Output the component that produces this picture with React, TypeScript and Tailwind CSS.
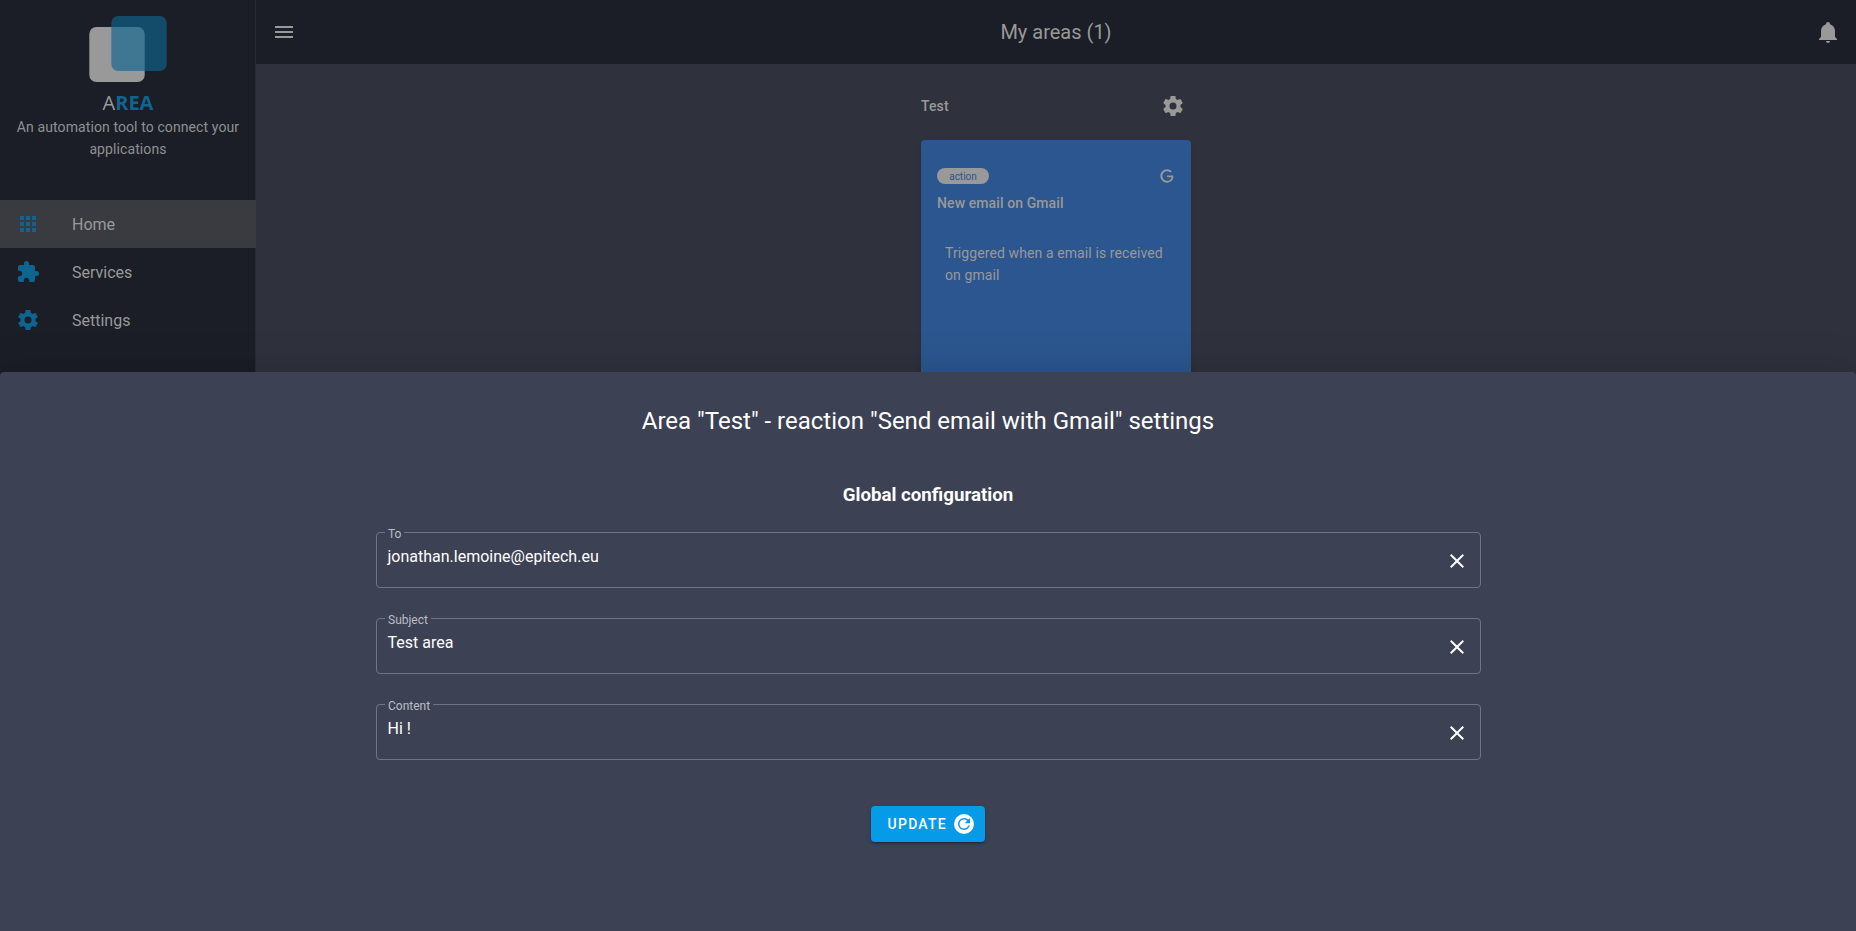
import type { ReactNode } from "react";

const paths = {
  menu: "M3,6H21V8H3V6M3,11H21V13H3V11M3,16H21V18H3V16Z",
  bell: "M21,19V20H3V19L5,17V11C5,7.9 7.03,5.17 10,4.29C10,4.19 10,4.1 10,4A2,2 0 0,1 12,2A2,2 0 0,1 14,4C14,4.1 14,4.19 14,4.29C16.97,5.17 19,7.9 19,11V17L21,19M14,21A2,2 0 0,1 12,23A2,2 0 0,1 10,21",
  apps: "M16,20H20V16H16M16,14H20V10H16M10,8H14V4H10M16,8H20V4H16M10,14H14V10H10M4,14H8V10H4M4,20H8V16H4M10,20H14V16H10M4,8H8V4H4V8Z",
  puzzle:
    "M20.5,11H19V7C19,5.89 18.1,5 17,5H13V3.5A2.5,2.5 0 0,0 10.5,1A2.5,2.5 0 0,0 8,3.5V5H4A2,2 0 0,0 2,7V10.8H3.5C5,10.8 6.2,12 6.2,13.5C6.2,15 5,16.2 3.5,16.2H2V20A2,2 0 0,0 4,22H7.8V20.5C7.8,19 9,17.8 10.5,17.8C12,17.8 13.2,19 13.2,20.5V22H17A2,2 0 0,0 19,20V16H20.5A2.5,2.5 0 0,0 23,13.5A2.5,2.5 0 0,0 20.5,11Z",
  cog: "M12,15.5A3.5,3.5 0 0,1 8.5,12A3.5,3.5 0 0,1 12,8.5A3.5,3.5 0 0,1 15.5,12A3.5,3.5 0 0,1 12,15.5M19.43,12.97C19.47,12.65 19.5,12.33 19.5,12C19.5,11.67 19.47,11.34 19.43,11L21.54,9.37C21.73,9.22 21.78,8.95 21.66,8.73L19.66,5.27C19.54,5.05 19.27,4.96 19.05,5.05L16.56,6.05C16.04,5.66 15.5,5.32 14.87,5.07L14.5,2.42C14.46,2.18 14.25,2 14,2H10C9.75,2 9.54,2.18 9.5,2.42L9.13,5.07C8.5,5.32 7.96,5.66 7.44,6.05L4.95,5.05C4.73,4.96 4.46,5.05 4.34,5.27L2.34,8.73C2.21,8.95 2.27,9.22 2.46,9.37L4.57,11C4.53,11.34 4.5,11.67 4.5,12C4.5,12.33 4.53,12.65 4.57,12.97L2.46,14.63C2.27,14.78 2.21,15.05 2.34,15.27L4.34,18.73C4.46,18.95 4.73,19.03 4.95,18.95L7.44,17.94C7.96,18.34 8.5,18.68 9.13,18.93L9.5,21.58C9.54,21.82 9.75,22 10,22H14C14.25,22 14.46,21.82 14.5,21.58L14.87,18.93C15.5,18.67 16.04,18.34 16.56,17.94L19.05,18.95C19.27,19.03 19.54,18.95 19.66,18.73L21.66,15.27C21.78,15.05 21.73,14.78 21.54,14.63L19.43,12.97Z",
  google:
    "M21.35,11.1H12.18V13.83H18.69C18.36,17.64 15.19,19.27 12.19,19.27C8.36,19.27 5,16.25 5,12C5,7.9 8.2,4.73 12.2,4.73C15.29,4.73 17.1,6.7 17.1,6.7L19,4.72C19,4.72 16.56,2 12.1,2C6.42,2 2.03,6.8 2.03,12C2.03,17.05 6.16,22 12.25,22C17.6,22 21.5,18.33 21.5,12.91C21.5,11.76 21.35,11.1 21.35,11.1V11.1Z",
  close:
    "M19,6.41L17.59,5L12,10.59L6.41,5L5,6.41L10.59,12L5,17.59L6.41,19L12,13.41L17.59,19L19,17.59L13.41,12L19,6.41Z",
};

function Icon({ name, className = "size-6" }: { name: keyof typeof paths; className?: string }) {
  return (
    <svg viewBox="0 0 24 24" fill="currentColor" className={`shrink-0 ${className}`}>
      <path d={paths[name]} />
    </svg>
  );
}

function Logo() {
  return (
    <svg viewBox="0 0 78 66" className="h-[66px] w-[78px]">
      <rect x="0.3" y="11" width="55.4" height="55" rx="7" fill="#999999" />
      <rect x="22.3" y="0" width="55.4" height="55" rx="7" fill="#106590" fillOpacity="0.65" />
    </svg>
  );
}

function NavItem({ icon, label, active }: { icon: "apps" | "puzzle" | "cog"; label: string; active?: boolean }) {
  return (
    <a className={`flex h-12 items-center gap-8 px-4 ${active ? "bg-[#393b41]" : ""}`}>
      <Icon name={icon} className="size-6 text-[#0f6490]" />
      <span className="pt-0.5 text-base text-[#999999]">{label}</span>
    </a>
  );
}

function Sidebar() {
  return (
    <aside className="flex w-64 shrink-0 flex-col border-r border-[#292b34] bg-[#1b1e27]">
      <div className="-mr-px flex h-[200px] flex-col items-center pt-4">
        <Logo />
        <div className="mt-[7px] h-[27px] font-['Open_Sans',sans-serif] text-xl leading-7 text-[#999999]">
          A<b className="text-[#0f6490]">REA</b>
        </div>
        <p className="px-4 text-center text-sm leading-[22px] tracking-[0.1px] text-[#8f9092]">
          An automation tool to connect your applications
        </p>
      </div>
      <nav className="-mr-px">
        <NavItem icon="apps" label="Home" active />
        <NavItem icon="puzzle" label="Services" />
        <NavItem icon="cog" label="Settings" />
      </nav>
    </aside>
  );
}

function Field({ label, children }: { label: string; children: ReactNode }) {
  return (
    <fieldset className="flex h-[62px] w-full items-start justify-between rounded border border-[#717480] pr-[11.5px] pl-[10.5px]">
      <legend className="-ml-[2.5px] h-3 px-[3px] text-xs leading-4 text-[#bcbdc4]">{label}</legend>
      <span className="mt-[9px] text-base leading-5 text-white">{children}</span>
      <Icon name="close" className="mt-[11px] size-6 text-white" />
    </fieldset>
  );
}

export default function App() {
  return (
    <div className="relative h-[931px] w-full overflow-hidden bg-[#2f313c] font-[Roboto,sans-serif]">
      <div className="flex h-full">
        <Sidebar />
        <div className="flex min-w-0 flex-1 flex-col">
          <header className="grid h-16 grid-cols-[1fr_auto_1fr] items-center bg-[#1b1e27] px-4 text-[#999999]">
            <Icon name="menu" />
            <h1 className="text-xl">My areas (1)</h1>
            <Icon name="bell" className="size-6 justify-self-end" />
          </header>
          <main className="flex justify-center pt-6">
            <section className="w-[270px] text-[#999999]">
              <div className="flex h-[52px] items-start justify-between pt-1.5 pr-1.5">
                <h2 className="pt-px text-sm leading-[22px] font-medium tracking-[0.1px]">Test</h2>
                <Icon name="cog" />
              </div>
              <article className="h-[400px] rounded bg-[#2b568f] px-4 pt-7 shadow-md">
                <div className="flex h-4 items-center justify-between">
                  <span className="flex h-4 w-[52px] items-center justify-center rounded-full bg-[#999999] text-[10px] text-[#2b568f]">
                    action
                  </span>
                  <Icon name="google" className="size-4" />
                </div>
                <h3 className="mt-2 text-sm leading-[22px] font-medium tracking-[0.1px]">New email on Gmail</h3>
                <p className="mt-7 px-2 text-sm leading-[22px] tracking-[0.1px]">
                  Triggered when a email is received on gmail
                </p>
              </article>
            </section>
          </main>
        </div>
      </div>

      <div
        role="dialog"
        className="absolute inset-x-0 bottom-0 flex h-[559px] flex-col items-center rounded-t bg-[#3d4154] text-white shadow-[0_11px_15px_-7px_rgba(0,0,0,0.2),0_24px_38px_3px_rgba(0,0,0,0.14),0_9px_46px_8px_rgba(0,0,0,0.12)]"
      >
        <h2 className="mt-[33px] text-2xl leading-8">Area "Test" - reaction "Send email with Gmail" settings</h2>
        <h3 className="mt-11 text-[18.72px] leading-7 font-bold">Global configuration</h3>
        <form className="mt-[17px] ml-px flex w-[1105px] flex-col gap-6">
          <Field label="To">jonathan.lemoine@epitech.eu</Field>
          <Field label="Subject">Test area</Field>
          <Field label="Content">Hi !</Field>
        </form>
        <button className="mt-[46px] flex h-9 w-[114px] items-center justify-end gap-[5px] rounded bg-[#069be8] pr-[9px] text-sm font-medium tracking-[1.25px] shadow-[0_3px_1px_-2px_rgba(0,0,0,0.2),0_2px_2px_0_rgba(0,0,0,0.14),0_1px_5px_0_rgba(0,0,0,0.12)]">
          UPDATE
          <svg viewBox="0 0 24 24" className="size-6">
            <circle cx="12" cy="12" r="10" fill="white" />
            <path
              className="fill-[#069be8]"
              transform="translate(3 3) scale(0.75)"
              d="M17.65,6.35C16.2,4.9 14.21,4 12,4A8,8 0 0,0 4,12A8,8 0 0,0 12,20C15.73,20 18.84,17.45 19.73,14H17.65C16.83,16.33 14.61,18 12,18A6,6 0 0,1 6,12A6,6 0 0,1 12,6C13.66,6 15.14,6.69 16.22,7.78L13,11H20V4L17.65,6.35Z"
            />
          </svg>
        </button>
      </div>
    </div>
  );
}
